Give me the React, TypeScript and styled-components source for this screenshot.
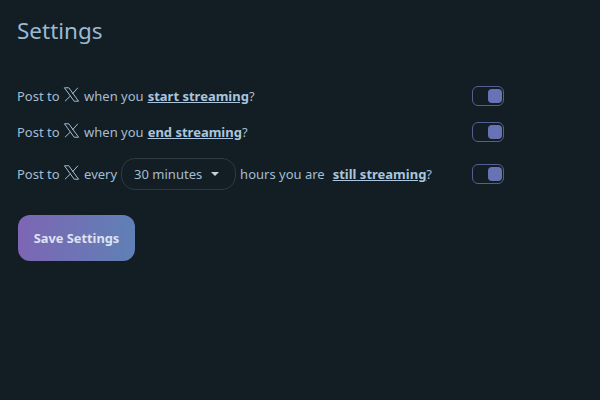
import styled, { createGlobalStyle } from "styled-components"

const GlobalStyle = createGlobalStyle`
    html, body {
        margin: 0;
        background: #131d24;
        font-family: 'Noto Sans', 'Open Sans', sans-serif;
    }
`;

const XLogo = () => (
    <XIcon viewBox="0 0 24 24" aria-label="X">
        <path d="M2 2.5h6.2L22 21.5h-6.2z" />
        <path d="M21 2.5l-7.8 8.8M10.6 14L2.8 21.5" />
    </XIcon>
)

export default function App() {
    return (
        <>
            <GlobalStyle />
            <Page>
                <Title>Settings</Title>
                <Rows>
                    <Row>
                        <RowText>
                            Post to <XLogo /> when you <Strong>start streaming</Strong>?
                        </RowText>
                        <Toggle />
                    </Row>
                    <Row>
                        <RowText>
                            Post to <XLogo /> when you <Strong>end streaming</Strong>?
                        </RowText>
                        <Toggle />
                    </Row>
                    <TallRow>
                        <RowText>
                            Post to <XLogo /> every
                            <Select>
                                30 minutes <Caret />
                            </Select>
                            hours you are <StillStrong>still streaming</StillStrong>?
                        </RowText>
                        <Toggle />
                    </TallRow>
                </Rows>
                <SaveButton>Save Settings</SaveButton>
            </Page>
        </>
    )
}


// Page Styles
const Page = styled.div`
    width: 600px;
    height: 400px;
    box-sizing: border-box;
    padding: 16px 0 0 17px;
    overflow: hidden;
`;

const Title = styled.h1`
    margin: 0;
    font-size: 22.5px;
    line-height: 30px;
    font-weight: 400;
    color: #9ab9d3;
`;

const Rows = styled.div`
    width: 487px;
    margin-top: 32px;
    display: flex;
    flex-direction: column;
`;

const Row = styled.div`
    height: 36px;
    display: flex;
    align-items: center;
    justify-content: space-between;
`;

const TallRow = styled(Row)`
    height: 48px;
`;

const RowText = styled.div`
    display: flex;
    align-items: center;
    font-size: 13px;
    color: #a3bdd2;
`;

const XIcon = styled.svg`
    width: 17px;
    height: 19px;
    margin: -3px 4px 0 3.5px;
    fill: none;
    stroke: #a3bdd2;
    stroke-width: 1.4;
`;

const Strong = styled.a`
    margin-left: 4px;
    font-size: 13px;
    font-weight: 700;
    color: #a9c6de;
    text-decoration: underline;
`;

const StillStrong = styled(Strong)`
    margin-left: 8px;
`;

const Select = styled.div`
    width: 115px;
    height: 32px;
    margin: 0 4px;
    padding-left: 12px;
    box-sizing: border-box;
    display: flex;
    align-items: center;
    gap: 9px;
    border: 1px solid #2c3a42;
    border-radius: 14px;
`;

const Caret = styled.span`
    width: 0;
    height: 0;
    border-left: 4px solid transparent;
    border-right: 4px solid transparent;
    border-top: 4px solid #c4d3df;
`;

const Toggle = styled.div`
    width: 32px;
    height: 20px;
    box-sizing: border-box;
    padding: 1.5px;
    display: flex;
    justify-content: flex-end;
    border: 1.5px solid #545f94;
    border-radius: 6px;

    &::after {
        content: "";
        width: 14px;
        height: 14px;
        border-radius: 4px;
        background: #6873b5;
    }
`;

const SaveButton = styled.button`
    width: 117px;
    height: 46px;
    margin: 17px 0 0 1px;
    display: block;
    border: none;
    border-radius: 12px;
    background: linear-gradient(90deg, #7d66b4, #5f80b6);
    color: #dde3f2;
    font-family: inherit;
    font-size: 12.8px;
    font-weight: 700;
`;
